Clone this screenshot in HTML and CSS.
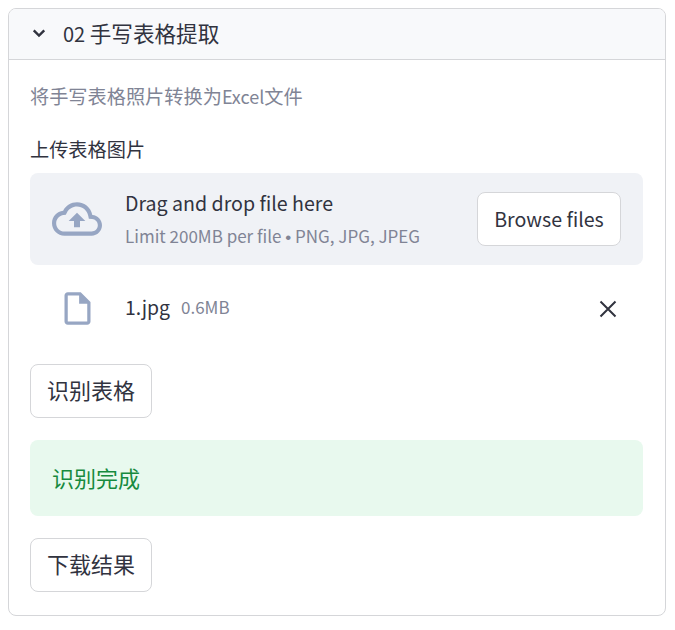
FILE: index.html
```html
<!DOCTYPE html>
<html lang="en">
<head>
    <meta charset="UTF-8">
    <meta name="viewport" content="width=device-width, initial-scale=1.0">
    <title>手写表格提取</title>
    <link rel="stylesheet" href="styles.css">
</head>
<body>
    <div class="expander">
        <div class="expander-header">
            <svg class="chevron" width="18" height="18" viewBox="0 0 24 24"><path d="M5 8.5l7 7 7-7" fill="none" stroke="#31333f" stroke-width="3.2"/></svg>
            <span>02 <span class="heading-cjk">手写表格提取</span></span>
        </div>
        <div class="expander-body">
            <p class="caption"><span class="cjk">将手写表格照片转换为</span>Excel<span class="cjk">文件</span></p>
            <p class="field-label">上传表格图片</p>

            <!-- Upload box -->
            <div class="dropzone">
                <svg class="cloud" width="50" height="50" viewBox="0 0 24 24"><path fill="#97a6c3" d="M19.35 10.04C18.67 6.59 15.64 4 12 4 9.11 4 6.6 5.64 5.35 8.04 2.34 8.36 0 10.91 0 14c0 3.31 2.69 6 6 6h13c2.76 0 5-2.24 5-5 0-2.64-2.05-4.78-4.65-4.96zM19 18H6c-2.21 0-4-1.79-4-4 0-2.05 1.53-3.76 3.56-3.97l1.07-.11.5-.95C8.08 7.14 9.94 6 12 6c2.62 0 4.88 1.86 5.39 4.43l.3 1.5 1.53.11c1.56.1 2.78 1.41 2.78 2.96 0 1.65-1.35 3-3 3zM8 13h2.55v3h2.9v-3H16l-4-4z"/></svg>
                <div class="drop-text">
                    <div class="drop-title">Drag and drop file here</div>
                    <div class="drop-limit">Limit 200MB per file <span class="bullet">•</span> PNG, JPG, JPEG</div>
                </div>
                <button class="btn browse">Browse files</button>
            </div>

            <!-- Uploaded file -->
            <div class="file-row">
                <svg class="file-icon" width="39" height="39" viewBox="0 0 24 24"><path fill="#97a6c3" d="M6 2c-1.1 0-2 .9-2 2v16c0 1.1.9 2 2 2h12c1.1 0 2-.9 2-2V8l-6-6H6zm0 2h7v5h5v11H6V4z"/></svg>
                <span class="file-name">1.jpg</span>
                <span class="file-size">0.6MB</span>
                <svg class="close" width="18" height="18" viewBox="0 0 18 18"><path d="M1.5 1.5l15 15M16.5 1.5l-15 15" fill="none" stroke="#31333f" stroke-width="2"/></svg>
            </div>

            <button class="btn action">识别表格</button>
            <div class="alert">识别完成</div>
            <button class="btn action">下载结果</button>
        </div>
    </div>
</body>
</html>
```

FILE: styles.css
```css
/* General Styles */
body, html {
    margin: 0;
    padding: 0;
    background-color: #fff;
    font-family: "Noto Sans CJK SC", "Noto Sans", sans-serif;
    color: #31333f;
}
body {
    padding: 8px;
}
p {
    margin: 0;
}

/* Expander */
.expander {
    width: 658px;
    height: 608px;
    box-sizing: border-box;
    border: 1px solid #d5d6d9;
    border-radius: 8px;
    overflow: hidden;
}
.expander-header {
    display: flex;
    align-items: center;
    height: 51px;
    box-sizing: border-box;
    padding: 0 0 2px 21px;
    background: #f8f9fb;
    border-bottom: 1px solid #d5d6d9;
    font-size: 20px;
    line-height: 28px;
}
.heading-cjk {
    font-size: 21.6px;
}
.chevron {
    margin-right: 15px;
}
.expander-body {
    padding: 22px 22px 0 21px;
}

.caption {
    font-size: 18px;
    line-height: 28px;
    color: #808495;
}
.cjk {
    font-size: 19.2px;
}
.field-label {
    margin-top: 25px;
    font-size: 19.2px;
    line-height: 28px;
}

/* Upload box */
.dropzone {
    display: flex;
    align-items: center;
    height: 92px;
    margin-top: 10px;
    padding: 0 22px;
    box-sizing: border-box;
    background: #f0f2f6;
    border-radius: 8px;
}
.cloud {
    margin-right: 23px;
}
.drop-text {
    flex: 1;
}
.drop-title {
    font-size: 19.6px;
    line-height: 30px;
}
.drop-limit {
    margin-top: 6px;
    font-size: 17px;
    line-height: 24px;
    color: #808495;
}
.bullet {
    font-family: "Liberation Sans", sans-serif;
}
.btn {
    background: #fff;
    border: 1px solid #d5d6d9;
    border-radius: 8px;
    color: #31333f;
    font-family: inherit;
    padding: 0;
}
.browse {
    width: 144px;
    height: 54px;
    padding-bottom: 2px;
    font-size: 19.6px;
}

/* Uploaded file */
.file-row {
    display: flex;
    align-items: center;
    height: 38px;
    margin-top: 24px;
    padding-left: 28px;
}
.file-name {
    margin-left: 28px;
    padding-bottom: 3px;
    font-size: 19.4px;
}
.file-size {
    margin-left: 11px;
    padding-bottom: 3px;
    font-size: 17px;
    color: #808495;
}
.close {
    margin-left: auto;
    margin-right: 26px;
    margin-top: 2px;
}

/* Buttons and alert */
.action {
    display: block;
    width: 122px;
    height: 54px;
    padding-bottom: 4px;
    font-size: 22px;
}
.file-row + .action {
    margin-top: 37px;
}
.alert {
    height: 76px;
    margin: 22px 0;
    padding-left: 22px;
    background: #e8f9ee;
    border-radius: 8px;
    color: #178a3e;
    font-size: 22px;
    line-height: 74px;
}
```
